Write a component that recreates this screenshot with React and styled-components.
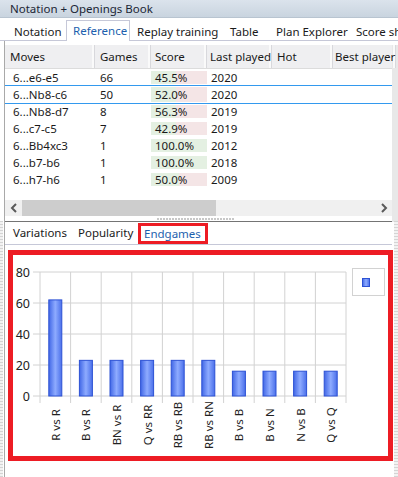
import React from "react";
import styled, { createGlobalStyle } from "styled-components";

const GlobalStyle = createGlobalStyle`
  html, body { margin: 0; padding: 0; background: #fff; }
  body { font-family: "Noto Sans", "Open Sans", sans-serif; }
`;

const rows = [
  { move: "6...e6-e5", games: 66, score: "45.5%", green: 45, year: 2020 },
  { move: "6...Nb8-c6", games: 50, score: "52.0%", green: 45, year: 2020, selected: true },
  { move: "6...Nb8-d7", games: 8, score: "56.3%", green: 45, year: 2019 },
  { move: "6...c7-c5", games: 7, score: "42.9%", green: 45, year: 2019 },
  { move: "6...Bb4xc3", games: 1, score: "100.0%", green: 100, year: 2012 },
  { move: "6...b7-b6", games: 1, score: "100.0%", green: 100, year: 2018 },
  { move: "6...h7-h6", games: 1, score: "50.0%", green: 50, year: 2009 },
];

const columns = [
  { title: "Moves", width: 90 },
  { title: "Games", width: 56 },
  { title: "Score", width: 56, pad: 4 },
  { title: "Last played", width: 65, pad: 3 },
  { title: "Hot", width: 61 },
  { title: "Best player", width: 59, pad: 2 },
];

const endgames = [
  { label: "R vs R", value: 62 },
  { label: "B vs R", value: 23 },
  { label: "BN vs R", value: 23 },
  { label: "Q vs RR", value: 23 },
  { label: "RB vs RB", value: 23 },
  { label: "RB vs RN", value: 23 },
  { label: "B vs B", value: 16 },
  { label: "B vs N", value: 16 },
  { label: "N vs B", value: 16 },
  { label: "Q vs Q", value: 16 },
];

function Chevron({ dir }) {
  return (
    <svg width="8" height="10" viewBox="0 0 8 10">
      <path
        d={dir === "left" ? "M6 1 L2 5 L6 9" : "M2 1 L6 5 L2 9"}
        fill="none"
        stroke="#5a5a5a"
        strokeWidth="2"
      />
    </svg>
  );
}

function EndgameChart() {
  const x0 = 27;
  const step = 30.6;
  const yOf = (v) => 141 - v * 1.55;
  const ticks = [0, 20, 40, 60, 80];
  return (
    <svg width="375" height="201" viewBox="0 0 375 201">
      <defs>
        <linearGradient id="bar" x1="0" x2="1" y1="0" y2="0">
          <stop offset="0" stopColor="#4167e6" />
          <stop offset="0.5" stopColor="#8eabff" />
          <stop offset="1" stopColor="#4a6fea" />
        </linearGradient>
      </defs>
      {ticks.map((t) => (
        <g key={t}>
          <line x1="20" x2="333" y1={yOf(t)} y2={yOf(t)} stroke="#d2d2d2" />
          <text x="17" y={yOf(t) + 4.5} textAnchor="end" fontSize="12.5" fill="#222"
            fontFamily="Noto Sans, sans-serif">{t}</text>
        </g>
      ))}
      {Array.from({ length: 11 }).map((_, i) => (
        <line key={i} x1={x0 + i * step} x2={x0 + i * step} y1={yOf(80)} y2="148" stroke="#d2d2d2" />
      ))}
      {endgames.map((e, i) => {
        const cx = x0 + step * (i + 0.5);
        return (
          <g key={e.label}>
            <rect x={cx - 6.5} y={yOf(e.value)} width="13" height={yOf(0) - yOf(e.value)}
              fill="url(#bar)" stroke="#2d52d4" strokeWidth="1" />
            <text x={cx} y="170" textAnchor="middle" dominantBaseline="central" fontSize="11.5"
              fill="#222" fontFamily="Noto Sans, sans-serif" transform={`rotate(-90 ${cx} 170)`}>
              {e.label}
            </text>
          </g>
        );
      })}
      <rect x="339.5" y="13.5" width="32" height="27" fill="#fff" stroke="#d2d2d2" />
      <rect x="349.5" y="23.5" width="7" height="8" fill="url(#bar)" stroke="#2d52d4" />
    </svg>
  );
}

export default function App() {
  return (
    <Window>
      <GlobalStyle />
      <TitleBar>Notation + Openings Book</TitleBar>
      <TabStrip>
        <Tab $w={59}>Notation</Tab>
        <Tab $w={64} $active>Reference</Tab>
        <Tab $w={93}>Replay training</Tab>
        <Tab $w={46}>Table</Tab>
        <Tab $w={80}>Plan Explorer</Tab>
        <Tab>Score sh</Tab>
      </TabStrip>
      <Body>
        <UpperPane>
          <TableArea>
            <HeaderRow>
              {columns.map((c) => (
                <HeaderCell key={c.title} $w={c.width} $pad={c.pad}>{c.title}</HeaderCell>
              ))}
            </HeaderRow>
            {rows.map((r) => (
              <Row key={r.move} $selected={r.selected}>
                <Cell $w={90} $pad={8}>{r.move}</Cell>
                <Cell $w={56}>{r.games}</Cell>
                <ScoreCell $w={56} $pad={4} $green={r.green}>{r.score}</ScoreCell>
                <Cell $w={65} $pad={4}>{r.year}</Cell>
                <Cell $w={61} />
                <Cell $w={59} />
              </Row>
            ))}
          </TableArea>
          <HScroll>
            <ScrollArrow><Chevron dir="left" /></ScrollArrow>
            <ScrollTrack>
              <ScrollThumb />
            </ScrollTrack>
            <ScrollArrow><Chevron dir="right" /></ScrollArrow>
          </HScroll>
          <SplitGrip>
            <GripDots />
          </SplitGrip>
        </UpperPane>
        <LowerPane>
          <SubTabStrip>
            <SubTab $w={65}>Variations</SubTab>
            <SubTab $w={66}>Popularity</SubTab>
            <SubTab $w={70} $active $highlight>Endgames</SubTab>
          </SubTabStrip>
          <ChartFrame>
            <EndgameChart />
          </ChartFrame>
        </LowerPane>
        <EdgeGrip $side="right" />
        <EdgeGrip $side="left" />
      </Body>
    </Window>
  );
}

const Window = styled.div`
  width: 398px;
  height: 477px;
  display: flex;
  flex-direction: column;
  overflow: hidden;
  background: #fff;
  color: #1a1a1a;
  font-size: 11.5px;
`;

const TitleBar = styled.div`
  height: 17px;
  line-height: 17px;
  padding-left: 10px;
  background: linear-gradient(#dbe3ec, #c9d4df);
  border-bottom: 1px solid #b8c4d0;
  color: #1b2635;
  font-size: 11.5px;
`;

const TabStrip = styled.div`
  height: 22px;
  display: flex;
  align-items: flex-end;
  padding-left: 7px;
  border-bottom: 1px solid #c6c8d8;
`;

const Tab = styled.div`
  flex: 0 0 ${(p) => (p.$w ? `${p.$w}px` : "auto")};
  box-sizing: border-box;
  height: ${(p) => (p.$active ? "21px" : "19px")};
  line-height: 19px;
  padding-left: 6px;
  white-space: nowrap;
  color: ${(p) => (p.$active ? "#1d5fae" : "#1a1a1a")};
  background: #fff;
  border: 1px solid ${(p) => (p.$active ? "#c6c8d8" : "transparent")};
  border-bottom: none;
  margin-bottom: ${(p) => (p.$active ? "-1px" : "0")};
`;

const Body = styled.div`
  flex: 1;
  display: flex;
  flex-direction: column;
  margin-left: 4px;
  border-left: 1px solid #a9a9a9;
  position: relative;
  padding-top: 4px;
`;

const UpperPane = styled.div`
  display: flex;
  flex-direction: column;
  width: 387px;
  border-right: 6px solid #e8e8e8;
`;

const TableArea = styled.div`
  height: 155px;
  display: flex;
  flex-direction: column;
`;

const HeaderRow = styled.div`
  display: flex;
  height: 23px;
  background: #efeff1;
  border-bottom: 1px solid #dcdcdc;
`;

const HeaderCell = styled.div`
  flex: 0 0 ${(p) => p.$w}px;
  box-sizing: border-box;
  padding-left: ${(p) => p.$pad ?? 5}px;
  line-height: 23px;
  border-right: 1px solid #d8d8dc;
  box-shadow: inset -2px 0 0 #fafafa;
  color: #1a1a1a;
  white-space: nowrap;
`;

const Row = styled.div`
  display: flex;
  box-sizing: border-box;
  border-top: 1px solid ${(p) => (p.$selected ? "#3399ee" : "transparent")};
  border-bottom: 1px solid ${(p) => (p.$selected ? "#3399ee" : "transparent")};
  margin: ${(p) => (p.$selected ? "-1px 0" : "0")};
  height: ${(p) => (p.$selected ? "19px" : "17px")};
`;

const Cell = styled.div`
  flex: 0 0 ${(p) => p.$w}px;
  box-sizing: border-box;
  padding-left: ${(p) => p.$pad ?? 5}px;
  white-space: nowrap;
  display: flex;
  align-items: center;
`;

const ScoreCell = styled(Cell)`
  background: linear-gradient(
    90deg,
    #e4f0e2 0,
    #e4f0e2 ${(p) => p.$green}%,
    #f4e5e6 ${(p) => p.$green}%,
    #f4e5e6 100%
  );
  border-top: 1px solid #fff;
  border-bottom: 1px solid #fff;
`;

const HScroll = styled.div`
  display: flex;
  height: 16px;
  background: #f0f0f0;
  align-items: stretch;
`;

const ScrollArrow = styled.div`
  width: 17px;
  display: flex;
  align-items: center;
  justify-content: center;
`;

const ScrollTrack = styled.div`
  flex: 1;
  display: flex;
`;

const ScrollThumb = styled.div`
  width: 194px;
  background: #cdcdcd;
`;

const SplitGrip = styled.div`
  height: 5px;
  display: flex;
  justify-content: center;
  align-items: center;
  border-bottom: 1px solid #747474;
`;

const GripDots = styled.div`
  width: 78px;
  height: 2px;
  margin-right: 6px;
  background: repeating-linear-gradient(90deg, #c8c8c8 0 2px, transparent 2px 3px);
`;

const LowerPane = styled.div`
  display: flex;
  flex-direction: column;
  width: 389px;
`;

const SubTabStrip = styled.div`
  height: 22px;
  display: flex;
  align-items: flex-end;
  padding-left: 2px;
  margin-right: 2px;
  border-bottom: 1px solid #c6c8d8;
`;

const SubTab = styled.div`
  flex: 0 0 ${(p) => p.$w}px;
  box-sizing: border-box;
  height: 21px;
  white-space: nowrap;
  color: ${(p) => (p.$active ? "#1d5fae" : "#1a1a1a")};
  border: ${(p) => (p.$highlight ? "3px solid #ed1c24" : "none")};
  padding-left: ${(p) => (p.$highlight ? "3px" : "6px")};
  line-height: ${(p) => (p.$highlight ? "15px" : "20px")};
`;

const ChartFrame = styled.div`
  margin: 5px 0 0 3px;
  width: 375px;
  height: 201px;
  border: 5px solid #ed1c24;
  background: #fff;
  display: flex;
`;

const EdgeGrip = styled.div`
  position: absolute;
  ${(p) => (p.$side === "left" ? "left: -5px;" : "right: 0;")}
  top: 180px;
  bottom: 0;
  width: ${(p) => (p.$side === "left" ? "3px" : "4px")};
  background: repeating-linear-gradient(180deg, #d4d4d4 0 1px, #f2f2f2 1px 3px);
`;
